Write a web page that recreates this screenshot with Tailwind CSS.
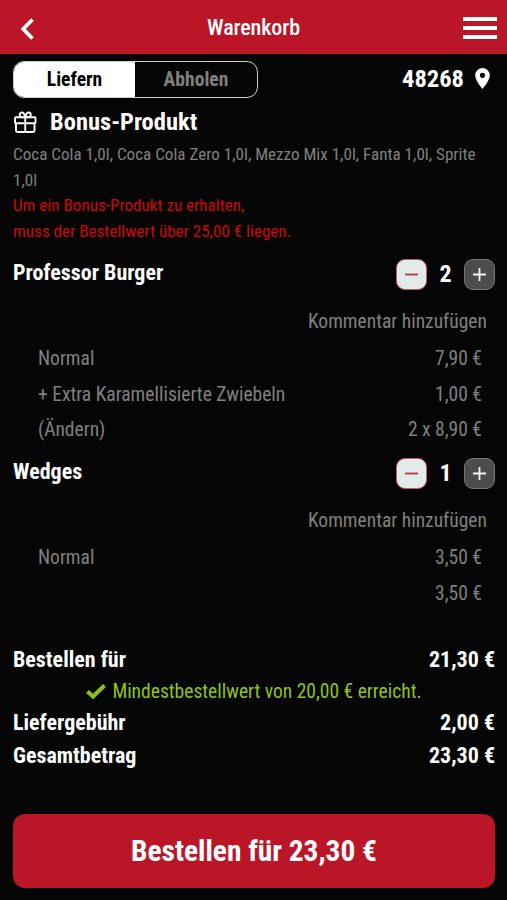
<!DOCTYPE html>
<html lang="de">
<head>
<meta charset="utf-8">
<title>Warenkorb</title>
<script src="https://cdn.jsdelivr.net/npm/@tailwindcss/browser@4"></script>
</head>
<body class="bg-[#050505]">
<div class="w-[507px] h-[900px] overflow-hidden bg-[#050505] text-[#808080] font-['Roboto_Condensed','Roboto',sans-serif] [font-stretch:75%] flex flex-col whitespace-nowrap">
  <header class="h-[54px] shrink-0 bg-[#bb1628] text-white grid grid-cols-[1fr_auto_1fr] items-center pl-[20px] pr-[10px]">
    <svg class="w-[14px] h-[22px] mt-[2px]" viewBox="0 0 14 22" fill="none" stroke="currentColor" stroke-width="3.8"><path d="M12.500 1.500 3.200 11l9.300 9.500"/></svg>
    <h1 class="text-[22px] leading-[54px] pt-[1px] pr-[10px] font-medium tracking-[-0.1px]">Warenkorb</h1>
    <svg class="w-[34px] h-[24px] mt-[1px] justify-self-end" viewBox="0 0 34 24" fill="currentColor"><path d="M0 1h34v4H0zM0 10h34v4H0zM0 19h34v4H0z"/></svg>
  </header>
  <main class="pl-[13px] pr-[12px] flex flex-col">
    <div class="flex justify-between items-center mt-[7px] h-[37px]">
      <div class="flex w-[245px] h-[37px] rounded-[11px] border border-white/80 overflow-hidden text-[19.600px] font-bold leading-[35px] text-center">
        <span class="w-[121px] bg-white text-black">Liefern</span>
        <span class="flex-1">Abholen</span>
      </div>
      <div class="flex items-center gap-[11px] pr-[5px] text-white text-[24.500px] font-bold">
        <span>48268</span>
        <svg class="w-[15px] h-[21px] -mt-[2px]" viewBox="0 0 15 21" fill="currentColor" fill-rule="evenodd"><path d="M7.500 0A7.300 7.300 0 0 0 .2 7.300C.2 12.800 7.500 21 7.500 21s7.300-8.200 7.300-13.700A7.300 7.300 0 0 0 7.500 0Zm0 4.700a2.600 2.600 0 1 1 0 5.200 2.600 2.600 0 0 1 0-5.200Z"/></svg>
      </div>
    </div>
    <div class="flex items-center h-[44px] mt-[2px] text-white">
      <svg class="w-[24px] h-[23px] mr-[13px]" viewBox="0 0 24 23" fill="none" stroke="currentColor" stroke-width="1.900" stroke-linejoin="round"><rect x="2" y="6.200" width="20.500" height="6" rx="1"/><path d="M3 12.200v7.300q0 1.500 1.500 1.500h15.500q1.500 0 1.500-1.500v-7.300M12.250 6.200V21M12.250 6.200H9C6 6.200 6 1.500 9 1.500c1.800 0 2.600 2 3.250 4.700C12.900 3.500 13.700 1.500 15.500 1.500c3 0 3 4.700 0 4.700Z"/></svg>
      <h2 class="text-[24.500px] font-bold">Bonus-Produkt</h2>
    </div>
    <div class="text-[17.080px] leading-[25.600px] -mt-[2px]">
      <p>Coca Cola 1,0l, Coca Cola Zero 1,0l, Mezzo Mix 1,0l, Fanta 1,0l, Sprite<br>1,0l</p>
      <p class="text-[#cf0508]">Um ein Bonus-Produkt zu erhalten,<br>muss der Bestellwert über 25,00 € liegen.</p>
    </div>
    <section class="mt-[10px] h-[199px] text-[19.550px]">
      <div class="flex justify-between h-[40px]">
        <h3 class="text-white font-bold text-[22px] leading-[37px]">Professor Burger</h3>
        <div class="flex items-center text-white">
          <svg class="size-[31px]" viewBox="0 0 31 31" fill="none"><rect x=".5" y=".5" width="30" height="30" rx="8.500" fill="#e2ebe9" stroke="#b95b6a"/><path d="M9 15.500h13" stroke="#bb3444" stroke-width="1.800"/></svg>
          <span class="w-[37px] text-center text-[24px] font-bold">2</span>
          <svg class="size-[31px]" viewBox="0 0 31 31" fill="none"><rect x=".5" y=".5" width="30" height="30" rx="8.500" fill="#4c4c4c" stroke="#777"/><path d="M9 15.500h13M15.500 9v13" stroke="#f4f4f4" stroke-width="1.800"/></svg>
        </div>
      </div>
      <p class="text-right pr-[8px] mt-[8px] leading-[40px] h-[39px]">Kommentar hinzufügen</p>
      <div class="pl-[25px] pr-[13px] leading-[35.500px]">
        <div class="flex justify-between"><span>Normal</span><span>7,90 €</span></div>
        <div class="flex justify-between"><span>+ Extra Karamellisierte Zwiebeln</span><span>1,00 €</span></div>
        <div class="flex justify-between"><span>(Ändern)</span><span>2 x 8,90 €</span></div>
      </div>
    </section>
    <section class="h-[190px] text-[19.550px]">
      <div class="flex justify-between h-[40px]">
        <h3 class="text-white font-bold text-[22px] leading-[37px]">Wedges</h3>
        <div class="flex items-center text-white">
          <svg class="size-[31px]" viewBox="0 0 31 31" fill="none"><rect x=".5" y=".5" width="30" height="30" rx="8.500" fill="#e2ebe9" stroke="#b95b6a"/><path d="M9 15.500h13" stroke="#bb3444" stroke-width="1.800"/></svg>
          <span class="w-[37px] text-center text-[24px] font-bold">1</span>
          <svg class="size-[31px]" viewBox="0 0 31 31" fill="none"><rect x=".5" y=".5" width="30" height="30" rx="8.500" fill="#4c4c4c" stroke="#777"/><path d="M9 15.500h13M15.500 9v13" stroke="#f4f4f4" stroke-width="1.800"/></svg>
        </div>
      </div>
      <p class="text-right pr-[8px] mt-[8px] leading-[40px] h-[39px]">Kommentar hinzufügen</p>
      <div class="pl-[25px] pr-[13px] leading-[35.500px]">
        <div class="flex justify-between"><span>Normal</span><span>3,50 €</span></div>
        <div class="flex justify-end"><span>3,50 €</span></div>
      </div>
    </section>
    <div class="text-white font-bold text-[22px] leading-[33px]">
      <div class="flex justify-between"><span>Bestellen für</span><span>21,30 €</span></div>
      <div class="flex justify-center items-center gap-[6px] h-[30px] text-[#8fc31a] font-normal text-[19.550px]">
        <svg class="w-[20px] h-[15px]" viewBox="0 0 20 15" fill="none" stroke="currentColor" stroke-width="4"><path d="m1.500 7.500 5.500 5L18.500 1.500"/></svg>
        <span>Mindestbestellwert von 20,00 € erreicht.</span>
      </div>
      <div class="flex justify-between"><span>Liefergebühr</span><span>2,00 €</span></div>
      <div class="flex justify-between"><span>Gesamtbetrag</span><span>23,30 €</span></div>
    </div>
    <button class="mt-[42px] h-[74px] rounded-[12px] bg-[#bb1628] text-white font-bold text-[29.400px]">Bestellen für 23,30 €</button>
  </main>
</div>
</body>
</html>
